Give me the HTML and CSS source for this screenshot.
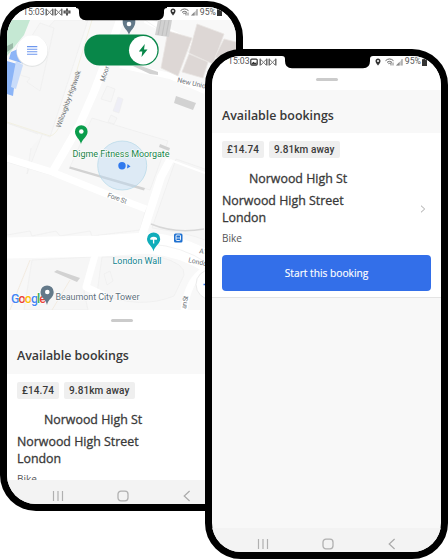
FILE: index.html
```html
<!DOCTYPE html>
<html lang="en">
<head>
<meta charset="utf-8">
<title>Courier bookings</title>
<link rel="stylesheet" href="styles.css">
</head>
<body>
<svg class="defs" aria-hidden="true">
  <defs>
    <symbol id="mail" viewBox="0 0 9 8"><path d="M1.200 7.500V.8M7.800 7.500V.8" stroke="#555" stroke-width="1.300"/><path d="M1.200 1L4.500 4.200 7.800 1M2 7L4.500 4.200 7 7" fill="none" stroke="#777" stroke-width="1"/></symbol>
    <symbol id="status-pin" viewBox="0 0 6 8"><path d="M3 .5C1.500.5.5 1.600.5 3 .5 4.800 3 7.500 3 7.500S5.500 4.800 5.500 3C5.500 1.600 4.500.5 3 .5Z" fill="#333"/><circle cx="3" cy="3" r="1" fill="#fff"/></symbol>
    <symbol id="wifi" viewBox="0 0 9 8"><path d="M.5 2.700Q4.500-.8 8.500 2.700M2 4.300Q4.500 2.300 7 4.300M3.400 5.700Q4.500 4.900 5.600 5.700" fill="none" stroke="#666" stroke-width="1"/><path d="M6 4.500V7.500M8 4.500V7.500" stroke="#666" stroke-width=".8"/></symbol>
    <symbol id="signal" viewBox="0 0 7 8"><path d="M0 7.500L6.500 1V7.500Z" fill="#ccc"/><path d="M0 7.500L3.500 4V7.500Z" fill="#888"/><path d="M6 1V7.500" stroke="#888" stroke-width=".8"/></symbol>
    <symbol id="battery" viewBox="0 0 5 8"><path d="M0 1.200H1.400V.3H3.600V1.200H5V8H0Z" fill="#333"/></symbol>
    <symbol id="recents" viewBox="0 0 12 12"><path d="M1.500 1V11M6 1V11M10.500 1V11" stroke="#b0b0b0" stroke-width="1.200"/></symbol>
    <symbol id="home" viewBox="0 0 12 12"><rect x="1" y="1.200" width="10" height="9.600" rx="3" fill="none" stroke="#b0b0b0" stroke-width="1.300"/></symbol>
    <symbol id="back" viewBox="0 0 12 12"><path d="M8.600 1L3.200 6 8.600 11" fill="none" stroke="#aaa" stroke-width="1.200"/></symbol>
    <symbol id="notch" viewBox="0 0 91 14"><path d="M0 0H91V1Q88 1 88 4V6Q88 13.300 81 13.300H10Q3 13.300 3 6V4Q3 1 0 1Z"/></symbol>
  </defs>
</svg>

<main class="stage">
  <section class="phone phone-map">
    <svg class="notch"><use href="#notch"/></svg>
    <div class="status">
      <span>15:03</span>
      <svg class="i9"><use href="#mail"/></svg><svg class="i9"><use href="#mail"/></svg>
      <svg class="i8" viewBox="0 0 8 8"><path d="M3 .5H5V2.400H7.500V5.600H5V7.500H3V5.600H.5V2.400H3Z" fill="#555"/><path d="M2 4H6" stroke="#bbb" stroke-width=".7"/></svg>
      <div class="status-right">
        <svg class="i6"><use href="#status-pin"/></svg><svg class="i9"><use href="#wifi"/></svg><svg class="i7"><use href="#signal"/></svg>
        <span>95%</span><svg class="i5"><use href="#battery"/></svg>
      </div>
    </div>

    <svg class="map" viewBox="7 20 229 290">
      <rect x="7" y="20" width="229" height="290" fill="#f8f8f8"/>
      <g fill="#f6f6f6" stroke="#eee" stroke-width=".7">
        <path d="M7 72L55 20H88L50 137 7 123Z"/>
        <path d="M92 118L168 141 150 190 70 167Z"/>
        <path d="M7 235L30 231 32 236 56 231 60 236 90 231 92 236 140 230 146 209 58 177 7 162Z" fill="#f8f8f8"/>
        <path d="M176 159L205 169V240Q188 233 152 228Z"/>
        <path d="M32 260L24 310H88L84 292 92 257Z"/>
        <path d="M102 257H160Q186 264 184 275L174 296Q140 310 97 293Z"/>
        <path d="M110 271L113 281 107 285 104 274Z"/>
        <path d="M107 86L115 89 111 102 101 99ZM111 115L117 118 114 124 108 122Z"/>
        <path d="M118 97L123 99 119 113 113 111Z" fill="#eeeef6"/>
        <path d="M40 23L54 28 40 91 27 82 30 78 20 75 28 42Z"/>
        <path d="M42 135L27 174 31 148M7 123L38 134"/>
      </g>
      <path d="M7 122L50 136Q56 135 61 123L92 20" fill="none" stroke="#f2f0e2" stroke-width="1"/>
      <path d="M30 260L10 310M70 280L52 310" stroke="#f1e9dc" fill="none" stroke-width=".8"/>
      <g fill="none" stroke="#fff" stroke-linejoin="round">
        <path d="M7 158L52 172 104 193 146 209" stroke-width="7"/>
        <path d="M53 171L79 126 94 92 104 66 120 20" stroke-width="8"/>
        <path d="M142 236L150 211 161 177 170 160" stroke-width="8"/>
        <path d="M170 160L205 173" stroke-width="2"/>
        <path d="M7 248L100 246 146 243Q180 245 208 262" stroke-width="21"/>
        <path d="M95 255L86 287 105 296" stroke-width="7"/>
        <path d="M205 270Q188 279 184 310" stroke-width="7"/>
        <path d="M120 65L170 76 205 91M145 20L205 49" stroke-width="6"/>
      </g>
      <path d="M150 244Q182 246 207 263" fill="none" stroke="#efefef" stroke-width=".8"/>
      <path d="M145 20Q180 43 205 65" fill="none" stroke="#eee" stroke-width=".7"/>
      <path d="M7 20H30L24 35 7 56Z" fill="#c5e8d3"/>
      <path d="M7 46L13 43V48L7 52Z" fill="#9ab9a7"/>
      <path d="M11 52L18 49 24 64 9 59ZM7 61L17 64 13 96 7 94Z" fill="#8cb5f7"/>
      <path d="M16 61L23 65 16 89 11 87Z" fill="#c9dcfa"/>
      <g fill="#ddd7d5" stroke="#e9e4e2" stroke-width=".8">
        <path d="M168 31L192 38 178 76 161 68Z"/><path d="M197 24L224 34 213 64 189 53Z"/><path d="M189 54L208 62 203 78 182 72Z"/><path d="M224 39L240 43 232 62 215 57Z"/>
      </g>
      <path d="M158 20H172L169 37 155 35Z" fill="#d1d1d1"/>
      <path d="M161 20L158 35M165 20L162 36M169 20L166 36" stroke="#bbb" stroke-width=".8"/>
      <g fill="#d2d2d2">
        <path d="M133 66H141L158 72V75L150 74Z"/><path d="M176 96L196 103 193 110 174 103Z"/><path d="M160 144L170 148 169 151 159 147Z"/>
        <path d="M70 166.500L145 188 144 190.500 69 168.500Z"/><path d="M57 270L80 278 77 282 54 272Z"/>
      </g>
      <path d="M151 224Q175 234 204 229" fill="none" stroke="#d7d7d7" stroke-width="1.500"/>
      <circle cx="122.200" cy="165.500" r="24.500" fill="#b9d9f2" fill-opacity=".42" stroke="#b4d8e8" stroke-width=".7"/>
      <circle cx="122" cy="165.700" r="3.700" fill="#3079ee"/><path d="M127.500 164L130.500 166.500 127 168.500Z" fill="#3079ee"/>
      <g class="road-name">
        <text transform="translate(60.500 128) rotate(-70)" textLength="60">Willoughby Highwalk</text>
        <text transform="translate(104.500 82) rotate(-72)" textLength="16">Moor</text>
        <text transform="translate(177 82) rotate(13)">New Union</text>
        <text transform="translate(107 197) rotate(20)" textLength="20">Fore St</text>
        <text transform="translate(199 253) rotate(10)">A12</text>
        <text transform="translate(188 262) rotate(13)">London</text>
        <text transform="translate(186 309) rotate(-80)" textLength="13">an St</text>
      </g>
      <path d="M81 144C80 139 75 137 75 131.500A6.300 6.300 0 0 1 87.600 131.500C87.600 137 82 139 81 144Z" fill="#0b9d4c"/><circle cx="81.300" cy="131.500" r="2.300" fill="#fff"/>
      <path d="M129 35C128 30 122.700 28 122.700 22V20H135.300V22C135.300 28 130 30 129 35Z" fill="#637989"/><circle cx="129" cy="24" r="2.300" fill="#fff"/>
      <path d="M153.500 251.500C152.500 246 147 244 147 239A6.600 6.600 0 0 1 160.200 239C160.200 244 154.500 246 153.500 251.500Z" fill="#10adba"/><path d="M153.600 243.500V237" stroke="#fff" stroke-width="1.300"/><path d="M150.300 239.700V238Q153.600 235.300 157 238V239.700Z" fill="#fff"/>
      <rect x="174" y="233.500" width="8.500" height="9" rx="1.500" fill="#1e70d0"/><rect x="176" y="235" width="4.500" height="5.500" rx="1" fill="none" stroke="#fff" stroke-width=".9"/><path d="M176 238H180.500" stroke="#fff" stroke-width=".8"/>
      <g class="place">
        <text x="72.500" y="156.500" textLength="97" fill="#168447">Digme Fitness Moorgate</text>
        <text x="112.500" y="264" textLength="49" fill="#0e838e">London Wall</text>
        <text x="55.500" y="299.500" textLength="84" fill="#5d707c">Beaumont City Tower</text>
      </g>
      <text class="google" x="11" y="302.500" textLength="35"><tspan fill="#4285f4">G</tspan><tspan fill="#ea4335">o</tspan><tspan fill="#fbbc05">o</tspan><tspan fill="#4285f4">g</tspan><tspan fill="#34a853">l</tspan><tspan fill="#ea4335">e</tspan></text>
      <path d="M47 305C46 299 40.500 298 40.500 292A6.600 6.600 0 0 1 53.700 292C53.700 298 48 299 47 305Z" fill="#637989"/><circle cx="47.300" cy="292" r="2.300" fill="#fff"/>
      <circle cx="211" cy="284.500" r="15" fill="#fff" stroke="#ebebeb"/><path d="M203.500 284.500H211" stroke="#3478ef" stroke-width="1.500"/>
      <circle cx="32.200" cy="51.200" r="15.800" fill="#e3e5e5"/><circle cx="32.200" cy="50.500" r="15.300" fill="#fff"/>
      <path d="M27 46.600H37.300M27 49.200H37.300M27 51.700H37.300M27 54.200H37.300" stroke="#6d97ee" stroke-width="1.100"/>
      <rect x="84.200" y="34.500" width="74.500" height="31" rx="15.500" fill="#088749"/>
      <circle cx="143.200" cy="50.300" r="14.200" fill="#fff"/>
      <path d="M144.800 44L138.800 51.500H142.300L141.500 57 147.500 49.500H144Z" fill="#088749"/>
    </svg>

    <div class="sheet-top"><span class="handle"></span></div>
    <h2 class="heading">Available bookings</h2>
    <article class="booking">
      <div class="chips"><span class="chip price">£14.74</span><span class="chip distance">9.81km away</span></div>
      <p class="pickup">Norwood High St</p>
      <p class="address">Norwood High Street<br>London</p>
      <p class="vehicle">Bike</p>
    </article>
    <nav class="nav"><svg><use href="#recents"/></svg><svg><use href="#home"/></svg><svg><use href="#back"/></svg></nav>
  </section>

  <section class="phone phone-list">
    <svg class="notch"><use href="#notch"/></svg>
    <div class="status">
      <span>15:03</span>
      <svg class="i8" viewBox="0 0 8 8"><rect x=".8" y="1.100" width="6.400" height="6" rx="1" fill="none" stroke="#333" stroke-width="1.200"/><path d="M1.500 6.500V5.500L3.500 3.800 5 5 6.500 4.300V6.500Z" fill="#333"/></svg>
      <svg class="i9"><use href="#mail"/></svg><svg class="i9"><use href="#mail"/></svg>
      <div class="status-right">
        <svg class="i6"><use href="#status-pin"/></svg><svg class="i9"><use href="#wifi"/></svg><svg class="i7"><use href="#signal"/></svg>
        <span>95%</span><svg class="i5"><use href="#battery"/></svg>
      </div>
    </div>
    <div class="sheet-top"><span class="handle"></span></div>
    <h2 class="heading">Available bookings</h2>
    <article class="booking">
      <div class="chips"><span class="chip price">£14.74</span><span class="chip distance">9.81km away</span></div>
      <p class="pickup">Norwood High St</p>
      <div class="address-row">
        <p class="address">Norwood High Street<br>London</p>
        <svg class="chevron" viewBox="0 0 6 8"><path d="M1 .7L4.700 4 1 7.300" fill="none" stroke="#aaa" stroke-width="1"/></svg>
      </div>
      <p class="vehicle">Bike</p>
      <button class="start">Start this booking</button>
    </article>
    <nav class="nav"><svg><use href="#recents"/></svg><svg><use href="#home"/></svg><svg><use href="#back"/></svg></nav>
  </section>
</main>
</body>
</html>
```
FILE: styles.css
```css
* { box-sizing: border-box; }
body { margin: 0; background: #fff; overflow: hidden; color: #393939; font-family: "Open Sans", "Noto Sans", sans-serif; }
p, h2 { margin: 0; white-space: nowrap; }
svg { display: block; flex: none; }
.defs { position: absolute; width: 0; height: 0; }
.stage { position: relative; width: 448px; height: 559px; overflow: hidden; }
.phone { position: absolute; display: flex; flex-direction: column; width: 243px; height: 510px; border: 7px solid #000; border-radius: 36px; overflow: hidden; background: #fff; }
.phone-map { left: 0; top: 1px; height: 509.500px; border-top-width: 6px; }
.phone-list { left: 205px; top: 49px; background: #f8f8f8; }
.notch { position: absolute; left: 69px; top: -.5px; width: 91px; height: 14px; }
.phone-list .notch { left: 69.500px; top: -1px; }

.status { display: flex; align-items: center; flex: none; height: 13px; padding: 0 14px 3px 16px; background: #fff; font: 8.700px/11px Roboto, sans-serif; color: #555; }
.phone-list .status { height: 15px; padding-bottom: 4px; }
.status > span { width: 21px; margin-right: 1px; }
.phone-list .status > .i8 { margin-right: 1px; }
.status-right { display: flex; align-items: center; margin-left: auto; gap: 2px; }
.i5 { width: 5px; height: 8px; margin-left: -1px; }
.i6 { width: 6px; height: 8px; margin-right: 2px; }
.i7 { width: 7px; height: 8px; }
.i8 { width: 8px; height: 8px; }
.i9 { width: 9px; height: 8px; }

.map { width: 229px; height: 290px; }
.road-name { font: 6.800px Roboto, sans-serif; fill: #6e7479; }
.place { font: 9px Roboto, sans-serif; stroke: #fff; stroke-width: 1px; paint-order: stroke; }
.google { font: 500 12.500px Roboto, sans-serif; stroke: #fff; stroke-width: 1px; paint-order: stroke; }

.sheet-top { flex: none; height: 20px; padding-top: 8.500px; background: #fff; }
.phone-list .sheet-top { height: 19px; padding-top: 7px; }
.handle { display: block; width: 22px; height: 3px; margin: 0 auto; border-radius: 2px; background: #cbcbcb; }
.heading { flex: none; height: 44px; padding: 16px 10px 0; background: #f8f8f8; font-size: 12.400px; line-height: 19px; font-weight: 600; }
.phone-list .heading { height: 43px; }
.booking { flex: none; padding: 8px 10px 0; background: #fff; }
.phone-map .booking { height: 106px; overflow: hidden; }
.phone-list .booking { height: 165px; border-bottom: 1px solid #e4e4e4; }
.chips { display: flex; gap: 5px; height: 17px; }
.chip { height: 17px; border-radius: 2px; background: #efefef; font: 500 10px/17px Roboto, sans-serif; text-align: center; white-space: nowrap; letter-spacing: .1px; }
.price { width: 42px; }
.distance { width: 70.500px; }
.pickup, .address { font-size: 12.400px; -webkit-text-stroke: .3px #393939; }
.pickup { margin: 12px 0 0 27px; line-height: 17px; }
.address-row { display: flex; align-items: center; justify-content: space-between; }
.address { margin-top: 6px; line-height: 16.500px; }
.chevron { width: 6px; height: 8px; margin-right: 5px; margin-top: 4px; }
.vehicle { margin-top: 5px; font-size: 10px; line-height: 15px; color: #555; }
.start { display: block; width: 209px; height: 36px; margin-top: 9px; padding: 0; border: 0; border-radius: 4px; background: #336fe9; color: #fff; font: 10.200px "Open Sans", sans-serif; -webkit-text-stroke: .15px #fff; }
.nav { display: flex; flex: none; align-items: center; gap: 52.500px; height: 24px; margin-top: auto; padding: 7px 0 0 45px; background: #f3f3f3; }
.phone-map .nav { padding-top: 8px; }
.nav svg { width: 12px; height: 12px; }
```
